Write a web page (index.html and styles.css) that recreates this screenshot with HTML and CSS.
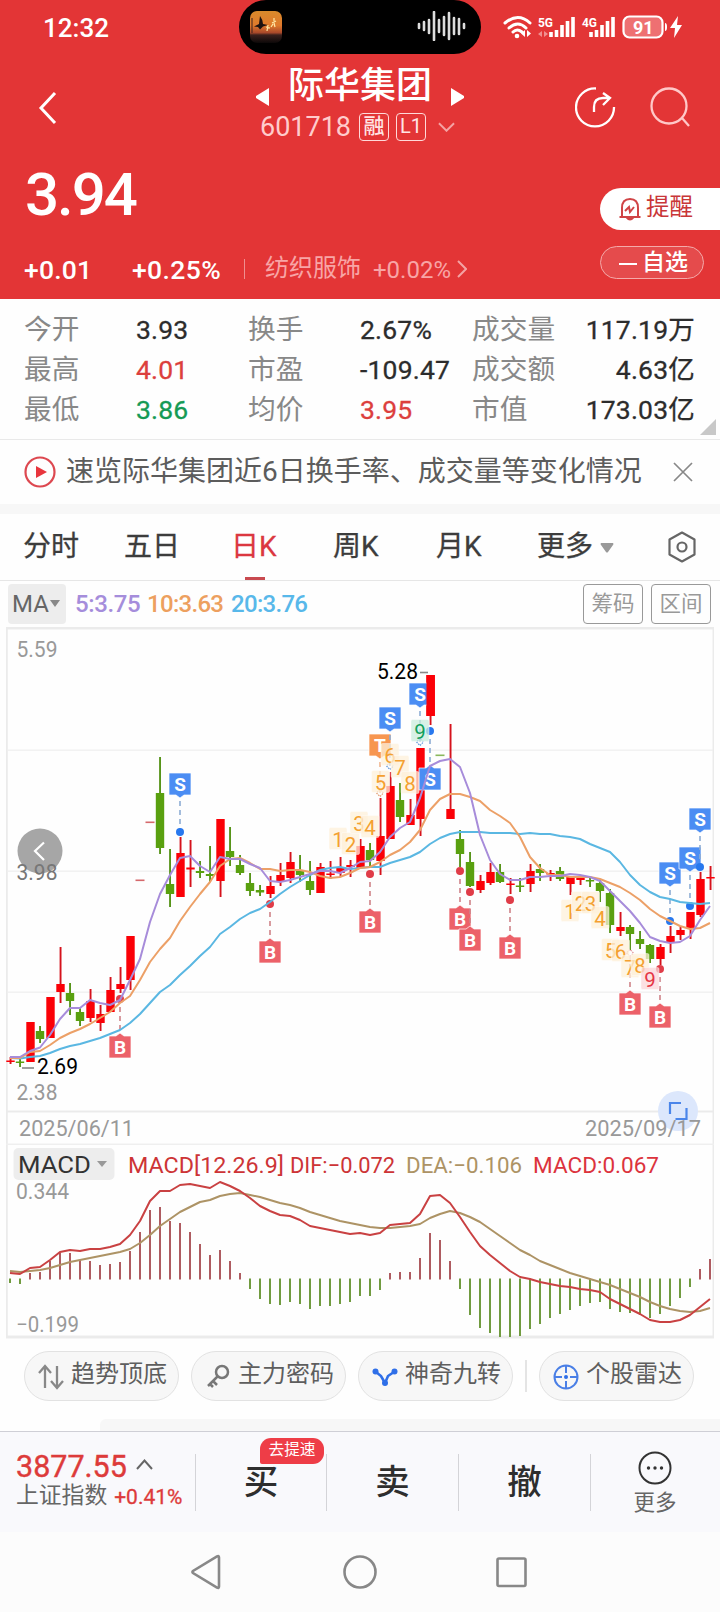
FILE: index.html
```html
<!DOCTYPE html>
<html lang="zh-CN">
<head>
<meta charset="utf-8">
<title>际华集团 601718</title>
<link rel="stylesheet" href="styles.css">
</head>
<body>
<header class="head">
  <div class="status">
    <span class="clock">12:32</span>
    <div class="island">
      <svg class="thumb" viewBox="0 0 32 32"><defs><linearGradient id="sun" x1="0" y1="0" x2="0" y2="1"><stop offset="0" stop-color="#d98a2b"/><stop offset=".45" stop-color="#e07a2c"/><stop offset=".68" stop-color="#a8482a"/><stop offset=".75" stop-color="#3a201c"/><stop offset="1" stop-color="#0c0808"/></linearGradient></defs><rect width="32" height="32" rx="7" fill="url(#sun)"/><path d="M10 5q3 4 3 8l5 1-5 1.500-3 3-2-2.500-4-.5 5-2.500z" fill="#1c1210"/><path d="M2 7v15" stroke="#3a201c"/><path d="M24 7v3M22 12l4-2M16 16l4 1M18 14l-1 6M24 12l1 4M21 16l2-3" stroke="#ffe9a8" stroke-width="1.200"/></svg>
      <svg class="wave" viewBox="0 0 50 30"><path d="M2 13v4M7 11v8M12 9v13M17 1v28M22 9v12M27 6v18M32 2v26M37 7v16M42 8v15M47 13v4" stroke="#ddd" stroke-width="2.600" stroke-linecap="round"/></svg>
    </div>
    <svg class="signals" viewBox="0 0 182 26">
      <g fill="none" stroke="#fff" stroke-width="3" stroke-linecap="round"><path d="M2 8Q15-3 27 8M6 13q9-8 17 0M10 17q4-4 9 0"/></g><circle cx="14" cy="21" r="2.300" fill="#fff"/><path d="M22 15v7l-4-3.500zM24 15v7l4-3.500z" fill="#fff"/>
      <text x="35" y="12" class="net" textLength="15" lengthAdjust="spacingAndGlyphs">5G</text><path d="M39 16v6l-4-3zM41 16v6l4-3z" fill="#f09090"/>
      <path d="M48 17v5M53.500 15v7M59 10v12M64.500 6v16M70 2v20" stroke="#fff" stroke-width="3.600"/>
      <text x="79" y="12" class="net" textLength="15" lengthAdjust="spacingAndGlyphs">4G</text>
      <path d="M88 17v5M93.500 15v7M99 10v12M104.500 6v16M110 2v20" stroke="#fff" stroke-width="3.600"/>
      <rect x="120.500" y="1.500" width="39" height="21" rx="6" fill="#ee7072" stroke="#fff" stroke-width="2.200"/><path d="M162 8q2 0 2 4t-2 4z" fill="#fff"/>
      <text x="130" y="18.500" class="pct">91</text>
      <path d="M175 1l-8 12h5l-1 10 8-13h-5z" fill="#fff"/>
    </svg>
  </div>
  <div class="nav">
    <svg class="back" viewBox="0 0 20 34"><path d="M17 2L3 17l14 15" fill="none" stroke="#fff" stroke-width="3"/></svg>
    <div class="titles">
      <div class="title"><svg class="tri" viewBox="0 0 13 18"><path d="M13 0v18L0 10V8z" fill="#fff"/></svg><h1>际华集团</h1><svg class="tri" viewBox="0 0 13 18"><path d="M0 0v18l13-8V8z" fill="#fff"/></svg></div>
      <div class="code"><span>601718</span><b>融</b><b class="lv">L1</b><svg viewBox="0 0 18 10"><path d="M1 1l8 8 8-8" fill="none" stroke="#f4a3a4" stroke-width="2"/></svg></div>
    </div>
    <svg class="share" viewBox="0 0 42 42"><g fill="none" stroke="#fff" stroke-width="2.300"><path d="M21 1.500A19 19 0 1 0 39 20"/><path d="M19 25v-5q0-9 9-9h6M28 6l7 5-7 7"/></g></svg>
    <svg class="search" viewBox="0 0 42 42"><g fill="none" stroke="#ffc8c8" stroke-width="2.300"><circle cx="19" cy="19" r="17.500"/><path d="M32 31l7 8"/></g></svg>
  </div>
  <div class="price">
    <strong>3.94</strong>
    <div class="remind"><svg viewBox="0 0 24 26"><g fill="none" stroke="#d04446" stroke-width="2"><path d="M4 20V11q0-9 8-9t8 9v9M1.500 20h21"/><path d="M7 14l4-4 1 5 4-5" stroke-width="2"/></g><path d="M8 20q4 5 8 0z" fill="#d04446" stroke="#d04446" stroke-width="2"/></svg>提醒</div>
  </div>
  <div class="change">
    <span class="abs">+0.01</span><span class="rel">+0.25%</span><i></i><span class="sector">纺织服饰</span><span class="spct">+0.02%</span>
    <svg class="go" viewBox="0 0 10 18"><path d="M1 1l8 8-8 8" fill="none" stroke="#f4a3a4" stroke-width="2"/></svg>
    <span class="own"><em></em>自选</span>
  </div>
</header>

<section class="stats">
  <span>今开</span><b>3.93</b><span>换手</span><b>2.67%</b><span>成交量</span><b class="end">117.19万</b>
  <span>最高</span><b class="up">4.01</b><span>市盈</span><b>-109.47</b><span>成交额</span><b class="end">4.63亿</b>
  <span>最低</span><b class="down">3.86</b><span>均价</span><b class="up">3.95</b><span>市值</span><b class="end">173.03亿</b>
  <svg class="corner" viewBox="0 0 16 16"><path d="M16 0v16H0z" fill="#c8c8c8"/></svg>
</section>

<section class="notice">
  <svg class="play" viewBox="0 0 32 32"><circle cx="16" cy="16" r="14.500" fill="none" stroke="#dd4850" stroke-width="2.200"/><path d="M12 10l11 6-11 6z" fill="#e8353d"/></svg>
  <p>速览际华集团近6日换手率、成交量等变化情况</p>
  <svg class="close" viewBox="0 0 20 20"><path d="M1 1l18 18M19 1L1 19" stroke="#888" stroke-width="1.700"/></svg>
</section>

<nav class="tabs">
  <span>分时</span><span>五日</span><span class="on">日K</span><span>周K</span><span>月K</span><span>更多<svg viewBox="0 0 14 10"><path d="M1 0h12q1 1 0 2L8 9q-1 1-2 0L1 2q-1-1 0-2z" fill="#999"/></svg></span>
  <svg class="hex" viewBox="0 0 30 32"><g fill="none" stroke="#666" stroke-width="2.200"><path d="M15 1.500l12.500 7v15L15 30.500l-12.500-7v-15z" stroke-linejoin="round"/><circle cx="15" cy="16" r="4.500"/></g></svg>
</nav>

<div class="ma">
  <span class="chip">MA<svg viewBox="0 0 10 7"><path d="M0 0h10L5 7z" fill="#888"/></svg></span>
  <span class="m5">5:3.75</span><span class="m10">10:3.63</span><span class="m20">20:3.76</span>
  <span class="btn">筹码</span><span class="btn last">区间</span>
</div>

<svg id="chart" class="chart" viewBox="0 626 720 716"></svg>

<div class="tools">
  <span class="pill"><svg viewBox="0 0 26 26"><path d="M7 24V3M1 9l6-7 6 7M19 2v21M13 17l6 7 6-7" fill="none" stroke="#888" stroke-width="2.300"/></svg>趋势顶底</span>
  <span class="pill"><svg viewBox="0 0 26 26"><g fill="none" stroke="#777" stroke-width="2.500"><circle cx="17" cy="8" r="6"/><path d="M13 12L3 22M8 17l4 4M5 20l3 3"/></g></svg>主力密码</span>
  <span class="pill"><svg viewBox="0 0 26 26"><path d="M4 8l5 4 4 7 3-7 6-4" fill="none" stroke="#2f6fe8" stroke-width="2.600"/><g fill="#2f6fe8"><circle cx="3.500" cy="7.500" r="3"/><circle cx="22.500" cy="7.500" r="3"/><circle cx="13" cy="19" r="3"/></g></svg>神奇九转</span>
  <i></i>
  <span class="pill"><svg viewBox="0 0 26 26"><g fill="none" stroke="#4a7fe6" stroke-width="2"><circle cx="13" cy="13" r="11.500"/><path d="M13 2v7M13 17v7M2 13h7M17 13h7"/></g><circle cx="13" cy="13" r="2" fill="#2f6fe8"/></svg>个股雷达</span>
</div>
<div class="peek"><div></div></div>

<footer class="trade">
  <div class="index">
    <div class="pts">3877.55<svg viewBox="0 0 17 11"><path d="M1 10l7.500-8.500L16 10" fill="none" stroke="#666" stroke-width="2"/></svg></div>
    <div class="sh">上证指数<b>+0.41%</b></div>
  </div>
  <div class="act">买<span>去提速</span></div>
  <div class="act">卖</div>
  <div class="act">撤</div>
  <div class="more"><svg viewBox="0 0 34 34"><circle cx="17" cy="17" r="15.500" fill="none" stroke="#333" stroke-width="2"/><g fill="#333"><circle cx="10.500" cy="17" r="1.700"/><circle cx="17" cy="17" r="1.700"/><circle cx="23.500" cy="17" r="1.700"/></g></svg>更多</div>
</footer>
<div class="sys">
  <svg viewBox="0 0 34 36"><path d="M29 3.500v29q0 2-2 1L3 19q-1-1 0-2L27 2.500q2-1 2 1z" fill="none" stroke="#888" stroke-width="2.600"/></svg>
  <svg viewBox="0 0 34 36"><circle cx="17" cy="18" r="15.500" fill="none" stroke="#888" stroke-width="2.600"/></svg>
  <svg viewBox="0 0 34 36"><rect x="2.500" y="4.500" width="28" height="27.500" rx="1.500" fill="none" stroke="#888" stroke-width="2.600"/></svg>
</div>
<script src="chart.js"></script>
</body>
</html>
```
FILE: styles.css
```css
* { box-sizing: border-box; margin: 0; padding: 0; }
body { width: 720px; height: 1612px; overflow: hidden; background: #fefefe; color: #333; font-family: Roboto, "Noto Sans CJK SC", sans-serif; }
svg { display: block; flex: none; }
b, em, i { font-weight: 400; font-style: normal; }
span, b, strong { white-space: nowrap; }

.head { height: 299px; background: #e33536; color: #fff; }
.status { height: 54px; display: flex; }
.clock { width: 196px; margin-left: 43px; font-size: 26px; font-weight: 500; line-height: 57px; }
.island { width: 242px; height: 54px; border-radius: 27px; background: #000; display: flex; justify-content: space-between; padding: 11px 14px 0 11px; }
.thumb { width: 32px; height: 32px; }
.wave { width: 50px; height: 30px; }
.signals { width: 182px; height: 26px; margin: 15px 0 0 22px; }
.net { font: 700 13.500px Roboto, sans-serif; fill: #fff; }
.pct { font: 700 18px Roboto, sans-serif; fill: #fff; }

.nav { height: 100px; display: flex; }
.back { width: 20px; height: 34px; margin: 37px 0 0 38px; }
.titles { width: 208px; margin-left: 198px; }
.title { display: flex; justify-content: space-between; height: 60px; }
.title h1 { font-size: 36px; font-weight: 500; line-height: 65px; }
.tri { width: 13px; height: 18px; margin-top: 34px; }
.code { display: flex; align-items: center; margin-left: 4px; height: 26px; color: #fcc; }
.code span { font-size: 27px; width: 99px; line-height: 26px; }
.code b { width: 30px; height: 28px; border: 1.500px solid #ffd9d9; border-radius: 4px; font-size: 21px; font-weight: 500; line-height: 24px; text-align: center; color: #ffe4e4; margin-right: 7px; }
.code .lv { font-size: 20px; font-weight: 400; margin-right: 12px; }
.code svg { width: 17px; height: 10px; }
.share { width: 42px; height: 42px; margin: 33px 0 0 111px; }
.search { width: 42px; height: 42px; margin: 33px 0 0 33px; }

.price { height: 80px; display: flex; justify-content: space-between; padding-left: 25px; }
.price strong { font-size: 60px; font-weight: 500; line-height: 81px; letter-spacing: -2px; }
.remind { width: 120px; height: 42px; margin-top: 34px; border-radius: 21px 0 0 21px; background: #fff; color: #c93638; font-size: 23.500px; line-height: 38px; display: flex; padding-left: 18px; gap: 4px; }
.remind svg { width: 24px; height: 26px; margin-top: 9px; }
.change { height: 60px; display: flex; padding-left: 24px; line-height: 72px; font-size: 26.500px; }
.abs, .rel { font-weight: 500; }
.abs { width: 108px; letter-spacing: .2px; }
.rel { width: 112px; letter-spacing: .4px; }
.change i { width: 1px; height: 20px; margin: 25px 20px 0 0; background: #ef8f90; }
.sector { color: #f8a5a6; font-size: 24px; width: 108px; line-height: 69px; }
.spct { color: #f8a5a6; font-size: 24px; width: 84px; }
.go { width: 10px; height: 18px; margin-top: 26px; }
.own { width: 104px; height: 33px; margin: 12px 0 0 133px; border: 1px solid #f4aaaa; border-radius: 17px; background: #e54b4c; font-size: 23px; font-weight: 500; line-height: 31px; display: flex; padding-left: 18px; gap: 5px; }
.own em { width: 18px; height: 2px; margin-top: 16px; background: #fff; }

.stats { position: relative; height: 141px; border-bottom: 1px solid #e9e9e9; padding: 11px 25px 0 24px; display: grid; grid-template-columns: 112px 112px 112px 112px 84px 139px; grid-auto-rows: 40px; line-height: 40px; font-size: 27.700px; }
.stats span { color: #888; }
.stats b { font-size: 26.500px; color: #2c2c2c; letter-spacing: .2px; -webkit-text-stroke: .3px currentColor; }
.stats .end { text-align: right; }
.stats .up { color: #dc3f3d; }
.stats .down { color: #159a55; }
.corner { position: absolute; right: 4px; bottom: 4px; width: 16px; height: 16px; }

.notice { height: 74px; border-bottom: 10px solid #f7f7f7; display: flex; align-items: center; padding: 0 27px 0 24px; }
.play { width: 32px; height: 32px; }
.notice p { margin-left: 10px; flex: 1; font-size: 28px; color: #5c5c5c; white-space: nowrap; line-height: 60px; }
.close { width: 20px; height: 20px; }

.tabs { height: 67px; border-bottom: 1px solid #e6e6e6; padding: 0 23px; display: grid; grid-template-columns: 101px 107px 102px 103px 101px 130px 30px; line-height: 66px; font-size: 28px; color: #3c3c3c; }
.tabs span { display: flex; position: relative; -webkit-text-stroke: .3px currentColor; }
.tabs .on { color: #db3740; }
.tabs .on::after { content: ""; position: absolute; left: 14px; bottom: 0; width: 20px; height: 3px; background: #c94a50; }
.tabs span svg { width: 14px; height: 10px; margin: 29px 0 0 7px; }
.hex { width: 30px; height: 32px; margin-top: 17px; }

.ma { height: 45px; display: flex; align-items: center; font-size: 24px; padding: 0 9px 0 8px; }
.chip { width: 58px; height: 40px; background: #ededed; border-radius: 4px; color: #666; line-height: 40px; padding-left: 4px; display: flex; align-items: center; gap: 1px; margin-right: 9px; }
.chip svg { width: 10px; height: 7px; }
.m5, .m10, .m20 { font-weight: 500; letter-spacing: -.7px; }
.m5 { color: #a58ddb; width: 72px; letter-spacing: -.4px; }
.m10 { color: #eda05f; width: 84px; }
.m20 { color: #58b8ea; flex: 1; }
.btn { width: 60px; height: 40px; border: 1.500px solid #999; border-radius: 4px; color: #999; text-align: center; font-size: 21.500px; line-height: 37px; }
.last { margin-left: 8px; }

.chart { width: 720px; height: 716px; }
.chart text { font-family: Roboto, "Noto Sans CJK SC", sans-serif; }

.tools { height: 77px; padding: 9px 26px 0 24px; display: flex; }
.pill { width: 155px; height: 50px; border: 1px solid #e2e2e2; border-radius: 25px; background: #f7f7f7; color: #5e5e5e; font-size: 24px; line-height: 44px; display: flex; padding-left: 13px; gap: 7px; margin-right: 12px; }
.pill svg { width: 26px; height: 26px; margin-top: 12px; }
.tools i { width: 2px; height: 32px; margin: 9px 12px 0 0; background: #e4e4e4; }
.tools .pill:last-child { margin-right: 0; }
.peek { height: 12px; padding-left: 100px; }
.peek div { height: 12px; background: #f7f7f7; border-radius: 6px 0 0 0; }

.trade { height: 101px; border-top: 1px solid #cfcfd6; background: #f9f9fc; display: flex; padding-top: 22px; }
.index { width: 196px; height: 57px; border-right: 1px solid #d4d4d8; padding-left: 16px; color: #dd3b3a; }
.pts { display: flex; align-items: center; gap: 9px; font-size: 30.500px; line-height: 30px; height: 25px; -webkit-text-stroke: .4px currentColor; }
.pts svg { width: 17px; height: 11px; margin-bottom: 4px; }
.sh { display: flex; gap: 7px; color: #666; font-size: 22.800px; line-height: 32px; height: 32px; margin-top: 1px; }
.sh b { color: #dd3b3a; font-size: 21px; line-height: 34px; -webkit-text-stroke: .3px currentColor; }
.act { position: relative; width: 132px; height: 57px; border-right: 1px solid #d4d4d8; text-align: center; font-size: 34.500px; font-weight: 500; line-height: 56px; color: #2e2e2e; }
.act:nth-child(2) { width: 131px; }
.act span { position: absolute; left: 64px; top: -16px; width: 64px; height: 26px; border-radius: 11px 11px 11px 2px; background: #ee3d47; color: #fff; font-size: 15.700px; font-weight: 400; line-height: 24px; }
.more { width: 128px; display: flex; flex-direction: column; align-items: center; font-size: 21.500px; line-height: 36px; color: #666; margin-top: -3px; }
.more svg { width: 34px; height: 34px; }

.sys { height: 80px; background: #fcfcfc; display: flex; justify-content: space-between; padding: 22px 191px 0 190px; }
.sys svg { width: 34px; height: 36px; }
```
FILE: chart.js
```js
// Daily candles: [high, body top, body bottom, low, r|g]; index i sits at x = 10 * (i + 1).
const RED = '#fb0007', GREEN = '#59a00f';
const candles = [
[1057,1060.500,1062,1064,'r'],[1058,1061.500,1063,1067,'g'],[1022,1022,1062,1062,'r'],[1026,1031,1039,1043,'g'],[997,997,1038,1038,'r'],[947,984,992,1003,'r'],[983,993,1001,1015,'g'],[1008,1012,1021,1026,'g'],[989,1001,1018,1022,'r'],[1005,1014,1023,1031,'r'],
[977,990,1012,1012,'r'],[967,984,989,993,'r'],[936,936,980,990,'r'],['dash',879.500,'#d5696c'],['dash',821.500,'#d5696c'],[757,793,848,854,'g'],[849,884,894,907,'g'],[837,853,897,897,'r'],[840,867.500,869.500,887,'r'],[861,871,873,878,'g'],
[846,874,876,882,'g'],[819,819,881,897,'r'],[827,851,857,866,'g'],[855,865,873,875,'g'],[873,883,891,896,'g'],[885,890,892.500,896,'g'],[876,886,894,898,'r'],[863,875,881,886,'r'],[852,862,878,883,'r'],[855,871,875,882,'g'],
[861,881,890,895,'g'],[863,867,893,893,'r'],[861,873.500,875,879,'r'],[857,868,873,877,'r'],[860,865,867,877,'r'],[839,846,868,868,'r'],[843,850,860,866,'g'],[798,836,861,875,'r'],[772,786,839,839,'r'],[783,800,817,822,'g'],
[799,815,825,825,'r'],[748,748,819,836,'r'],[675,675,716,725,'r'],['dash',754.500,'#8ab85c'],[724,809,819,819,'r'],[830,839,854,867,'g'],[852,862,886,887,'g'],[875,881,890,893,'r'],[863,872,883,885,'r'],[864,872,882,883,'g'],
[878,883.500,885,894,'r'],[878,885.500,887,892,'g'],[864,871,884,892,'r'],[864,869,873,881,'g'],[870,873,874.500,881,'r'],[867,871,879,881,'g'],[877,877,884,895,'r'],[877,878,880,885,'r'],[878,880,881.500,887,'g'],[880,883,891,902,'g'],
[889,893,925,933,'g'],[912,927,931,936,'r'],[925,927,934,950,'g'],[931,939,944,949,'g'],[944,945,959,963,'g'],[944,947,959,965,'r'],[926,936,942,953,'r'],[927,930,935,940,'r'],[912,912,928,939,'r'],[872,879,915,917,'r'],[866,877,878.500,890,'r']];

const ma5 = [1057,1057,1051,1047.500,1035,1019,1008,1008,1000,1003,1005,1000,980,959,922,894,875,858,856,866,872,857,859,859,864,868,881,882,880,877,874,871,871,873,868,862,861,852,837,828,822,798,766,761,759,767,793,835,860,874,880,880,877,877,876,876,874,875,877,881,891,901,911,923,937,941,943,942,936,920,906];
const ma10 = [1058,1058,1052,1051,1045,1038,1033,1029,1024,1018,1012,1003,996,980,962,949,938,921,907,894,882,866,859,858,863,869,869,871,870,870,872,876,878,877,873,868,867,862,855,850,842,830,810,799,794,794,797,801,810,816,823,837,857,868,875,875,877,877,877,879,883,887,893,900,909,916,921,926,929,928,923];
const ma20 = [1058,1058.500,1057,1056,1053,1049,1046,1044,1041,1038,1034,1030,1023,1014,1003,992,985,975,966,956,947,934,927,919,913,909,902,894,887,881,875,870,868,867,869,868,867,867,863,860,857,852,844,838,834,832,832,832,833,833,833,834,833,834,834,836,837,839,844,848,852,862,875,885,892,897,899,902,903,904,903];
const dif = [1273,1274,1268,1267,1260,1252,1250,1251,1249,1249,1247,1244,1235,1221,1201,1191,1191,1185,1184,1186,1188,1182,1186,1191,1198,1206,1211,1215,1216,1220,1226,1228,1230,1232,1234,1233,1235,1233,1225,1224,1223,1214,1196,1195,1203,1217,1232,1246,1255,1263,1271,1277,1279,1282,1284,1286,1287,1289,1290,1292,1299,1304,1309,1314,1320,1322,1322,1320,1315,1307,1299];
const dea = [1271,1272,1271,1270,1268,1265,1262,1260,1258,1256,1254,1252,1249,1243,1235,1226,1219,1212,1207,1202,1200,1196,1194,1193,1195,1197,1200,1203,1205,1208,1212,1215,1218,1221,1223,1225,1227,1228,1228,1227,1226,1224,1218,1214,1211,1213,1217,1222,1229,1236,1243,1250,1255,1261,1265,1269,1273,1276,1279,1282,1285,1289,1293,1297,1302,1306,1309,1311,1312,1311,1308];
const hist = [1283,1284,1273,1272,1261,1253,1253,1260,1261,1265,1264,1262,1251,1232,1210,1207,1221,1223,1232,1244,1255,1250,1261,1273,1289,1299,1304,1305,1302,1304,1309,1306,1306,1304,1302,1296,1296,1290,1273,1272,1272,1258,1233,1240,1261,1289,1315,1328,1333,1337,1337,1336,1329,1324,1318,1314,1310,1306,1303,1302,1309,1312,1313,1315,1318,1314,1306,1298,1287,1269,1259];

let out = '';
const rect = (x, y, w, h, fill, extra = '') => { out += `<rect x="${x}" y="${y}" width="${w}" height="${h}" fill="${fill}" ${extra}/>`; };
const path = (d, stroke, width, extra = '') => { out += `<path d="${d}" fill="none" stroke="${stroke}" stroke-width="${width}" ${extra}/>`; };
const text = (s, x, y, size, fill, width, extra = '') => { out += `<text x="${x}" y="${y}" font-size="${size}" fill="${fill}" ${width ? `textLength="${width}" lengthAdjust="spacingAndGlyphs"` : ''} ${extra}>${s}</text>`; };
const series = (a, color) => path('M' + a.map((y, i) => `${10 * (i + 1)} ${y}`).join('L'), color, 2, 'stroke-linejoin="round"');

// frame and grid
rect(6, 627, 708, 2.500, '#ebebeb'); rect(6, 627, 1.800, 710, '#ebebeb'); rect(712.500, 627, 1.500, 710, '#ebebeb');
[750, 871, 992].forEach(y => rect(8, y - .5, 705, 1.300, '#efefef'));
rect(6, 1110.500, 708, 2, '#ebebeb'); rect(6, 1143.500, 708, 1.500, '#efefef'); rect(6, 1335.500, 708, 3, '#ebebeb');

candles.forEach((c, i) => {
  const x = 10 * (i + 1);
  if (c[0] === 'dash') { rect(x - 4.500, c[1], 9, 1.600, c[2]); return; }
  const col = c[4] === 'r' ? RED : GREEN, cx = x + (c[4] === 'r' ? .5 : 0);
  rect(cx - .9, c[0], 1.900, c[3] - c[0], c[4] === 'r' ? '#d5121c' : '#57941a');
  rect(cx - 4.200, c[1], 8.400, Math.max(1.400, c[2] - c[1]), col);
});

// trade markers: [letter, x, box top, anchor dot y]
const blue = '#4b8df3', pink = '#ec6169';
[['S',180,773,832],['B',120,1036,999],['B',270,941,904],['B',370,911,874],['T',380,734,793],['S',390,707,766],['S',420,683,742],['S',430,768,731],['B',460,908,871],['B',470,929,892],['B',510,937,900],['B',630,993,953],['B',660,1006,969],['S',670,862,921],['S',690,847,906],['S',700,808,867]].forEach(([s, x, top, dot]) => {
  const above = dot > top, col = s === 'S' ? blue : s === 'T' ? '#f79650' : pink;
  const edge = above ? top + 22 : top, tip = above ? 3 : -3;
  path(`M${x} ${edge + tip * 2}V${dot}`, s === 'S' ? '#8cacd4' : s === 'T' ? '#f0b48c' : '#cf8288', 1.600, 'stroke-dasharray="5 4"');
  if (s === 'T' || x === 390 || x === 420 || x === 630) path(`M${x - 3.500} ${dot}l3.500 3.500 3.500-3.500-3.500-3.500z`, s === 'T' ? '#e09a70' : s === 'S' ? '#6096d8' : '#df8c94', 1.200, 'stroke-dasharray="1.5 1"');
  else out += `<circle cx="${x}" cy="${dot}" r="4" fill="${s === 'S' ? '#2878ee' : '#e03c48'}"/>`;
  out += `<g stroke="#fff" stroke-width=".7"><path d="M${x - 11} ${top}h${above ? 22 : 7}${above ? '' : 'l4-3 4 3h7'}v22h${above ? -7 : -22}${above ? 'l-4 3-4-3h-7' : ''}z" fill="${col}"/></g>`;
  text(s, x, top + 17.500, 19, '#fff', 0, 'font-weight="700" text-anchor="middle"');
});
rect(426.500, 675, 8.400, 41, RED);

// nine-turn counters
[['1',338,839],['2',350.500,844],['3',359,823],['4',370,827],['5',380.500,782],['6',390,755],['7',400,767],['8',410,783],['9',420,731,'#12a05c','#c9ecdd'],['1',570,911],['2',580.500,903],['3',590.500,903],['4',600,918],['5',610.500,950],['6',620.500,951],['7',630,967],['8',640,965],['9',650,979,'#e53645','#fbd5d8']].forEach(([n, x, y, fg = '#f4a030', bg = '#fef0d9']) => {
  rect(x - 9, y - 11.500, 18, 22, bg, 'rx="1.500" fill-opacity=".75" stroke="#fff" stroke-opacity=".6" stroke-width=".7"');
  text(n, x, y + 7.500, 20.500, fg, 0, 'text-anchor="middle"');
});
series(ma20, '#5ab7e2'); series(ma10, '#eca067'); series(ma5, '#a78cda');

// axis labels and extremes
text('5.59', 16.500, 657, 21.500, '#999', 41); text('2.38', 16.500, 1100, 21.500, '#999', 41);
out += '<circle cx="40" cy="851" r="22.500" fill="#999" fill-opacity=".87"/>';
text('3.98', 16.500, 880, 21.500, '#777', 41);
path('M44 842.500L35 851l9 9', '#fff', 2.200);
path('M22 1068h12', '#888', 1.600); text('2.69', 37, 1074, 21.500, '#000', 41);
text('5.28', 377, 679, 21.500, '#000', 41); path('M420 672.500h8', '#888', 1.600);
out += '<circle cx="678" cy="1111" r="20" fill="#dce7fc"/>';
path('M681 1103h-11v11M686.500 1108v11h-11', '#4a85ea', 2.200);
text('2025/06/11', 19, 1136, 21.500, '#999', 115); text('2025/09/17', 585, 1136, 21.500, '#999', 116);

// MACD pane
rect(13.500, 1148, 101, 32, '#ededed', 'rx="5"');
text('MACD', 18, 1173, 24, '#333', 73);
out += '<path d="M97 1161h10l-5 6z" fill="#999"/>';
text('MACD[12.26.9]', 128, 1173, 22.500, '#cd3436', 156); text('DIF:−0.072', 290, 1173, 22.500, '#cd3436', 105);
text('DEA:−0.106', 406, 1173, 22.500, '#ad9365', 116); text('MACD:0.067', 533, 1173, 22.500, '#dc333d', 126);
text('0.344', 16, 1199, 21.500, '#999', 53); text('−0.199', 16, 1332, 21.500, '#999', 63);
hist.forEach((y, i) => {
  const x = 10 * (i + 1) - 1;
  y < 1278 ? rect(x, y, 2, 1279.500 - y, '#ae5b60') : rect(x, 1278.500, 2, y - 1278.500, '#719b40');
});
series(dea, '#ad9365'); series(dif, '#c94142');
document.getElementById('chart').innerHTML = out;
```
